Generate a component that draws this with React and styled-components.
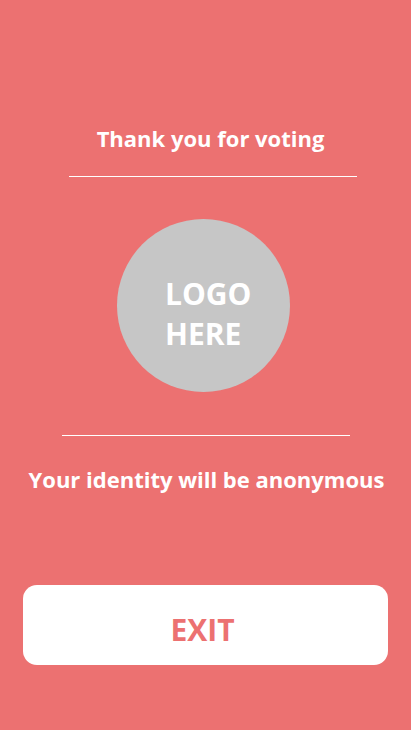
import styled, { createGlobalStyle } from "styled-components";

const GlobalStyle = createGlobalStyle`
  body {
    margin: 0;
    background: #ffffff;
    font-family: "Open Sans", "Liberation Sans", sans-serif;
  }
`;

const Screen = styled.div`
  height: 730px;
  background: #ec7171;
  display: flex;
  flex-direction: column;
  align-items: center;
  color: #ffffff;
`;

const Heading = styled.h2`
  margin: ${(p) => p.$top}px 0 0;
  font-size: 22px;
  line-height: 30px;
  font-weight: 700;
  transform: translateX(${(p) => p.$shift || 0}px);
`;

const Divider = styled.hr`
  margin: ${(p) => p.$top}px 0 0;
  width: 288px;
  border: none;
  border-top: 1px solid #ffffff;
  transform: translateX(${(p) => p.$shift || 0}px);
`;

const LogoCircle = styled.div`
  box-sizing: border-box;
  margin-top: 42px;
  padding: 17px 0 0 48px;
  width: 173px;
  height: 173px;
  border-radius: 50%;
  background: #c6c6c6;
  display: flex;
  align-items: center;
  font-size: 30px;
  line-height: 40px;
  font-weight: 700;
  transform: translateX(-2px);
`;

const ExitButton = styled.button`
  margin-top: 91px;
  padding: 8px 6px 0 0;
  width: 365px;
  height: 80px;
  border: none;
  border-radius: 14px;
  background: #ffffff;
  color: #ec7171;
  font-family: inherit;
  font-size: 30px;
  font-weight: 700;
  cursor: pointer;
`;

export default function App() {
  return (
    <>
      <GlobalStyle />
      <Screen>
        <Heading $top={123} $shift={5}>Thank you for voting</Heading>
        <Divider $top={23} $shift={7} />
        <LogoCircle>
          <div>
            LOGO
            <br />
            HERE
          </div>
        </LogoCircle>
        <Divider $top={43} />
        <Heading $top={28} $shift={1}>Your identity will be anonymous</Heading>
        <ExitButton>EXIT</ExitButton>
      </Screen>
    </>
  );
}
